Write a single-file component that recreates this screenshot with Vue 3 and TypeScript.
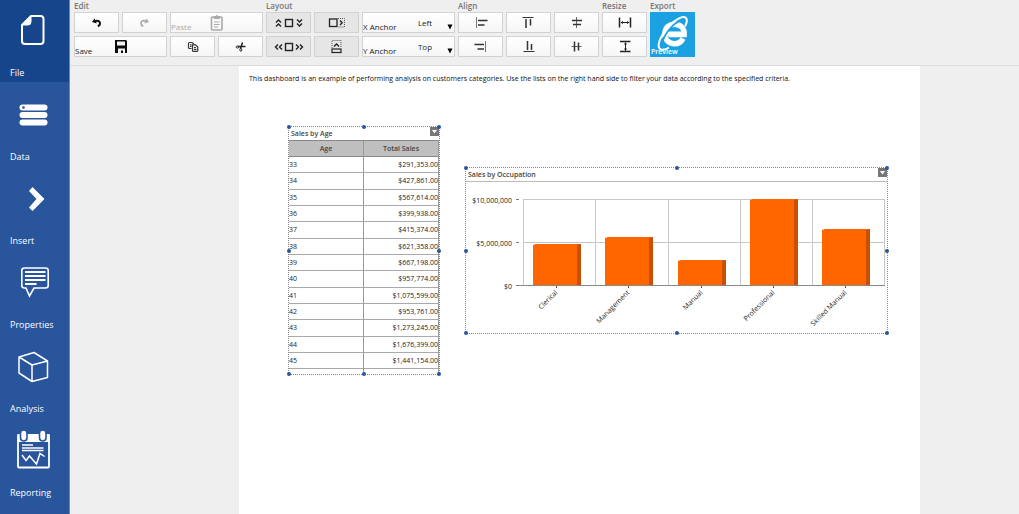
<script setup lang="ts">
import { ref } from 'vue'

interface Occupation {
  name: string
  x: number
  top: number
}

const sections = ['File', 'Data', 'Insert', 'Properties', 'Analysis', 'Reporting']
const active = ref('File')
const xAnchor = ref('Left')
const yAnchor = ref('Top')

const sales: [number, string][] = [
  [33, '$291,353.00'],
  [34, '$427,861.00'],
  [35, '$567,614.00'],
  [36, '$399,938.00'],
  [37, '$415,374.00'],
  [38, '$621,358.00'],
  [39, '$667,198.00'],
  [40, '$957,774.00'],
  [41, '$1,075,599.00'],
  [42, '$953,761.00'],
  [43, '$1,273,245.00'],
  [44, '$1,676,399.00'],
  [45, '$1,441,154.00'],
  [46, '$1,391,088.00'],
]

const base = 103
const occupations: Occupation[] = [
  { name: 'Clerical', x: 67, top: 62 },
  { name: 'Management', x: 139, top: 55 },
  { name: 'Manual', x: 212, top: 78 },
  { name: 'Professional', x: 284, top: 17 },
  { name: 'Skilled Manual', x: 356, top: 47 },
]
const gridX = [57, 129, 202, 274, 346, 418]
const ticks = [
  { label: '$10,000,000', y: 17 },
  { label: '$5,000,000', y: 60 },
  { label: '$0', y: 103 },
]
const handles = ['nw', 'n', 'ne', 'w', 'e', 'sw', 's', 'se']
</script>

<template>
  <div class="app">
    <nav class="sidebar">
      <button
        v-for="s in sections"
        :key="s"
        type="button"
        class="section"
        :class="{ active: s === active }"
        @click="active = s"
      >
        <svg class="section-icon" viewBox="0 0 70 66" fill="none" stroke="#fff" aria-hidden="true">
          <g v-if="s === 'File'">
            <path d="M31 18H40.500Q43.500 18 43.500 21V43Q43.500 46 40.500 46H25Q22 46 22 43V27Z" stroke-width="2" />
            <path d="M22 27L31 18V24Q31 27 28 27Z" fill="#fff" />
          </g>
          <g v-else-if="s === 'Data'" fill="#fff" stroke="none">
            <rect x="19.500" y="22.500" width="28" height="6" rx="3" />
            <rect x="19.500" y="30" width="28" height="6" rx="3" />
            <rect x="19.500" y="37.500" width="28" height="6" rx="3" />
            <circle cx="23.500" cy="25.500" r="1.300" fill="#28559c" />
          </g>
          <path v-else-if="s === 'Insert'" d="M29 25L32.500 21L44.500 33L32.500 45L29 41.500L36.500 33Z" fill="#fff" stroke="none" />
          <g v-else-if="s === 'Properties'">
            <path d="M24.500 18H45.500Q48.200 18 48.200 20.500V35.500Q48.200 38 45.500 38H34L29.500 46L26 38H24.500Q21.800 38 21.800 35.500V20.500Q21.800 18 24.500 18Z" stroke-width="1.600" />
            <path d="M25 22H45.500M25 26H45.500M25 30H45.500M25 34H36.500" stroke-width="2" />
          </g>
          <path v-else-if="s === 'Analysis'" d="M19 23L34 18.500L47.500 27V43.500L32 47.500L19 39ZM19 23L32 31L47.500 27M32 31V47.500" stroke-width="1.500" stroke-linejoin="round" />
          <g v-else>
            <rect x="18" y="17" width="31" height="32.500" rx="1" stroke-width="1.800" />
            <path d="M17.500 16H49.500V24H17.500Z" fill="#fff" stroke="none" />
            <rect x="20.500" y="12" width="6.500" height="11" rx="3.200" fill="#fff" stroke="#28559c" stroke-width="1.600" />
            <rect x="39.500" y="12" width="6.500" height="11" rx="3.200" fill="#fff" stroke="#28559c" stroke-width="1.600" />
            <path d="M22 27H33M22 30H43.500M22 32.500H43.500" stroke-width="1.300" />
            <path d="M22 37L26 42.500L29.500 38L36.500 46L40 35.500L44.500 38.500" stroke-width="1.500" />
          </g>
        </svg>
        <span class="section-label">{{ s }}</span>
      </button>
    </nav>

    <div class="workspace">
      <header class="toolbar">
        <section class="group four">
          <h2>Edit</h2>
          <div class="buttons">
            <button type="button" class="tool" aria-label="Undo">
              <svg viewBox="1 1 43 19" fill="none" aria-hidden="true">
                <path d="M20.500 9.300C23.500 8 26 9 26 11.300C26 12.800 25.200 13.800 23.800 14.300" stroke="#111" stroke-width="2" />
                <path d="M18 10L20.500 6.500L22.800 11.500Z" fill="#111" />
              </svg>
            </button>
            <button type="button" class="tool" aria-label="Redo">
              <svg viewBox="1 1 43 19" fill="none" aria-hidden="true">
                <path d="M24.500 9.300C21.500 8 19 9 19 11.300C19 12.800 19.800 13.800 21.200 14.300" stroke="#aaa" stroke-width="1.800" />
                <path d="M27 10L24.500 6.500L22.200 11.500Z" fill="#aaa" />
              </svg>
            </button>
            <button type="button" class="tool wide" disabled>
              <svg viewBox="1 1 91 19" fill="none" stroke="#aaa" aria-hidden="true">
                <rect x="41.500" y="5" width="10.500" height="13" rx="1" stroke-width="1.600" />
                <path d="M44 6.500V4.500H45.500Q46.700 2.500 48 4.500H49.500V6.500Z" fill="#aaa" />
                <path d="M44 10H49.500M44 12.500H49.500M44 15H48" />
              </svg>
              <span>Paste</span>
            </button>
            <button type="button" class="tool wide">
              <svg viewBox="1 1 91 19" aria-hidden="true">
                <path d="M41 4H52L53 5V17H41Z" fill="#0b0b0b" />
                <path d="M43 5.500H51V9.500H43ZM44 12.500H51V17H49V14.500H47V17H44Z" fill="#f4f4f4" />
              </svg>
              <span>Save</span>
            </button>
            <button type="button" class="tool" aria-label="Copy">
              <svg viewBox="1 1 43 19" fill="none" stroke="#333" stroke-width="1.200" aria-hidden="true">
                <path d="M21.500 12.500H19.500Q18.500 12.500 18.500 11.500V7.500Q18.500 6.500 19.500 6.500H22L24 8" />
                <path d="M22.500 8.800H25.500L27.800 11V14.500Q27.800 15.300 27 15.300H23.300Q22.500 15.300 22.500 14.500ZM20 8.800H21.500M20 10.500H21.500M24 11.500H26M24 13.300H26.500" />
              </svg>
            </button>
            <button type="button" class="tool" aria-label="Cut">
              <svg viewBox="1 1 43 19" fill="none" stroke="#222" aria-hidden="true">
                <path d="M27.500 10.500L20 10.500M24.500 6.500L22.500 12.500" stroke-width="1.500" />
                <ellipse cx="19.500" cy="11" rx="1.400" ry="1" />
                <ellipse cx="22.800" cy="13.800" rx="1" ry="1.400" />
              </svg>
            </button>
          </div>
        </section>

        <section class="group four">
          <h2>Layout</h2>
          <div class="buttons">
            <button type="button" class="tool shaded" aria-label="Stretch vertically">
              <svg viewBox="1 1 43 19" fill="none" stroke="#222" stroke-width="1.400" aria-hidden="true">
                <rect x="19.500" y="7.500" width="7" height="7" />
                <path d="M10 10.500L12.500 8L15 10.500M10 14.500L12.500 12L15 14.500M31 7.500L33.500 10L36 7.500M31 11.500L33.500 14L36 11.500" />
              </svg>
            </button>
            <button type="button" class="tool shaded" aria-label="Fill right">
              <svg viewBox="1 1 43 19" fill="none" stroke="#222" aria-hidden="true">
                <rect x="15.500" y="7" width="7.500" height="7.500" stroke-width="1.300" />
                <path d="M24 6.500H30.500V15H24" stroke="#555" stroke-dasharray="1 1" />
                <path d="M26 8.500L28.200 10.800L26 13" stroke-width="1.300" />
              </svg>
            </button>
            <label class="anchor">
              <span class="anchor-label">X Anchor</span>
              <select v-model="xAnchor">
                <option>Left</option>
                <option>Right</option>
              </select>
              <svg class="caret" viewBox="0 0 6 6" aria-hidden="true"><path d="M0.500 0.500H5.500L3 5.500Z" /></svg>
            </label>
            <button type="button" class="tool shaded" aria-label="Stretch horizontally">
              <svg viewBox="1 1 43 19" fill="none" stroke="#222" stroke-width="1.400" aria-hidden="true">
                <rect x="19.500" y="7.500" width="7" height="7" />
                <path d="M12 8.500L9.500 11L12 13.500M16 8.500L13.500 11L16 13.500M30 8.500L32.500 11L30 13.500M34 8.500L36.500 11L34 13.500" />
              </svg>
            </button>
            <button type="button" class="tool shaded" aria-label="Fill top">
              <svg viewBox="1 1 43 19" fill="none" stroke="#222" aria-hidden="true">
                <rect x="18" y="13" width="9" height="3.500" stroke-width="1.200" />
                <path d="M18 12V4.500H27V12" stroke="#555" stroke-dasharray="1 1" />
                <path d="M20 10.500L22.500 8L25 10.500" stroke-width="1.300" />
              </svg>
            </button>
            <label class="anchor">
              <span class="anchor-label">Y Anchor</span>
              <select v-model="yAnchor">
                <option>Top</option>
                <option>Bottom</option>
              </select>
              <svg class="caret" viewBox="0 0 6 6" aria-hidden="true"><path d="M0.500 0.500H5.500L3 5.500Z" /></svg>
            </label>
          </div>
        </section>

        <section class="group three">
          <h2>Align</h2>
          <div class="buttons">
            <button type="button" class="tool" aria-label="Align left">
              <svg viewBox="1 1 43 19" stroke="#333" aria-hidden="true">
                <path d="M18.500 5V16" stroke="#777" />
                <path d="M20 8.500H29.500M20 13H26.500" stroke-width="1.500" />
              </svg>
            </button>
            <button type="button" class="tool" aria-label="Align top">
              <svg viewBox="1 1 43 19" stroke="#333" aria-hidden="true">
                <path d="M16.500 5.500H27.500" />
                <path d="M20 7V16M24.500 7V13.500" stroke-width="1.500" />
              </svg>
            </button>
            <button type="button" class="tool" aria-label="Center horizontally">
              <svg viewBox="1 1 43 19" stroke="#333" aria-hidden="true">
                <path d="M22.500 5V16" stroke="#666" />
                <path d="M18 8.500H28M19 12.500H27" stroke-width="1.500" />
              </svg>
            </button>
            <button type="button" class="tool" aria-label="Align right">
              <svg viewBox="1 1 43 19" stroke="#333" aria-hidden="true">
                <path d="M27.500 5V16" stroke="#777" />
                <path d="M16.500 8.500H26M19.500 13H26" stroke-width="1.500" />
              </svg>
            </button>
            <button type="button" class="tool" aria-label="Align bottom">
              <svg viewBox="1 1 43 19" stroke="#333" aria-hidden="true">
                <path d="M17.500 15.500H28.500" />
                <path d="M21.500 5V14M25.500 8V14" stroke-width="1.500" />
              </svg>
            </button>
            <button type="button" class="tool" aria-label="Center vertically">
              <svg viewBox="1 1 43 19" stroke="#333" aria-hidden="true">
                <path d="M17.500 10.500H27.500" stroke="#666" />
                <path d="M20.500 5.500V15.500M24.500 6.500V14.500" stroke-width="1.500" />
              </svg>
            </button>
          </div>
        </section>

        <section class="group one">
          <h2>Resize</h2>
          <div class="buttons">
            <button type="button" class="tool" aria-label="Same width">
              <svg viewBox="1 1 43 19" stroke="#222" fill="#222" aria-hidden="true">
                <path d="M17.500 5.500V15.500M28.500 5.500V15.500" stroke-width="1.500" />
                <path d="M19 10.500H27" />
                <path d="M18.500 10.500L21 9V12ZM27.500 10.500L25 9V12Z" stroke="none" />
              </svg>
            </button>
            <button type="button" class="tool" aria-label="Same height">
              <svg viewBox="1 1 43 19" stroke="#222" fill="#222" aria-hidden="true">
                <path d="M18 5.500H28.500M18 15.500H28.500" stroke-width="1.500" />
                <path d="M23.500 7V15" />
                <path d="M23.500 6L22 8.500H25ZM23.500 15L22 12.500H25Z" stroke="none" />
              </svg>
            </button>
          </div>
        </section>

        <section class="group one">
          <h2>Export</h2>
          <div class="buttons">
            <button type="button" class="preview">
              <svg viewBox="0 0 45 45" fill="none" aria-hidden="true">
                <path d="M33 26.500C31 30.500 28 32 24 31.800C18 31.500 14.500 27 14.800 21.500C15.300 15 19.500 12 25 12.300C31 12.700 34.500 16.500 34.200 22.500H18.500" stroke="#fff" stroke-width="5.400" />
                <path d="M16.500 21.800H32" stroke="#fff" stroke-width="4.400" />
                <path d="M12.500 34.500C11 30 15 22 21 15.500C25.500 10.500 31 7.500 34 8.500" stroke="#1ba1e2" stroke-width="1.800" />
                <path d="M19 35.500C14.500 38.500 10.500 38.500 9.200 36C7 31.500 11.500 22.500 18.500 14.500C25 7.500 33 3.300 35.800 5.800C37.500 7.500 36.800 11 35 14.500" stroke="#fff" stroke-width="2" />
              </svg>
              <span>Preview</span>
            </button>
          </div>
        </section>
      </header>

      <main class="canvas">
        <div class="page">
          <p class="intro">
            This dashboard is an example of performing analysis on customers categories. Use the lists on the right hand side to filter your data according to the specified criteria.
          </p>
          <div class="widgets">
            <article class="widget age">
              <div class="widget-head">
                <h3>Sales by Age</h3>
                <button type="button" class="menu" aria-label="Sales by Age menu">
                  <svg viewBox="0 0 9 9" aria-hidden="true"><path d="M2 3H7L4.500 6.500Z" fill="#fff" /></svg>
                </button>
              </div>
              <div class="clip">
                <table>
                  <thead>
                    <tr><th scope="col">Age</th><th scope="col">Total Sales</th></tr>
                  </thead>
                  <tbody>
                    <tr v-for="row in sales" :key="row[0]">
                      <td>{{ row[0] }}</td>
                      <td class="amount">{{ row[1] }}</td>
                    </tr>
                  </tbody>
                </table>
              </div>
              <i v-for="h in handles" :key="h" class="handle" :class="h"></i>
            </article>

            <article class="widget occupation">
              <div class="widget-head">
                <h3>Sales by Occupation</h3>
                <button type="button" class="menu" aria-label="Sales by Occupation menu">
                  <svg viewBox="0 0 9 9" aria-hidden="true"><path d="M2 3H7L4.500 6.500Z" fill="#fff" /></svg>
                </button>
              </div>
              <svg class="chart" viewBox="0 0 421 151" role="img" aria-label="Sales by Occupation">
                <g stroke="#c8c8c8" fill="none">
                  <path v-for="x in gridX" :key="x" :d="`M${x}.5 17V103`" />
                  <path d="M57 17.500H419M57 60.500H419" />
                </g>
                <g v-for="t in ticks" :key="t.label">
                  <text :x="46" :y="t.y + 4" text-anchor="end">{{ t.label }}</text>
                  <path :d="`M50 ${t.y}.5H53`" stroke="#777" />
                </g>
                <path d="M53 103.500H419" stroke="#888" />
                <g v-for="o in occupations" :key="o.name">
                  <path :d="`M${o.x} ${base}V${o.top + 1}L${o.x + 3} ${o.top}H${o.x + 48}V${base}Z`" fill="#ff6600" />
                  <path :d="`M${o.x + 44} ${base}V${o.top + 1}L${o.x + 48} ${o.top}V${base}Z`" fill="#c85000" />
                  <path :d="`M${o.x + 23}.5 104V106`" stroke="#555" />
                  <text text-anchor="end" :transform="`translate(${o.x + 25} 111) rotate(-45)`">{{ o.name }}</text>
                </g>
              </svg>
              <i v-for="h in handles" :key="h" class="handle" :class="h"></i>
            </article>
          </div>
        </div>
      </main>
    </div>
  </div>
</template>

<style>
html,
body {
  margin: 0;
  height: 100%;
}
#app {
  height: 100%;
}
</style>

<style scoped>
.app {
  display: flex;
  height: 100vh;
  overflow: hidden;
  background: #efefef;
  color: #222;
  font-family: "Open Sans", "Noto Sans", sans-serif;
  font-size: 8px;
}
button,
select {
  font: inherit;
  color: inherit;
}
.sidebar {
  box-sizing: border-box;
  flex: none;
  width: 70px;
  background: #28559c;
  border-right: 1px solid #6a87b8;
}
.section {
  box-sizing: border-box;
  display: flex;
  flex-direction: column;
  justify-content: flex-end;
  gap: 1px;
  width: 100%;
  height: 84px;
  padding: 0 0 2px;
  border: 0;
  background: transparent;
  color: #fff;
  text-align: left;
}
.section:first-child {
  height: 82px;
}
.section.active {
  background: #17458b;
}
.section-icon {
  flex: none;
  width: 70px;
  height: 66px;
}
.section-label {
  padding-left: 10px;
  font-size: 9px;
  line-height: 15px;
}
.workspace {
  flex: 1;
  min-width: 0;
  display: flex;
  flex-direction: column;
}
.toolbar {
  display: flex;
  gap: 3px;
  padding: 0 4px 8px;
  border-bottom: 1px solid #dcdcdc;
}
.group h2 {
  margin: 0;
  font-size: 8px;
  font-weight: 600;
  line-height: 12px;
  color: #777;
}
.buttons {
  display: grid;
  grid-template-columns: repeat(4, 45px);
  grid-auto-rows: 21px;
  gap: 3px;
}
.three .buttons {
  grid-template-columns: repeat(3, 45px);
}
.one .buttons {
  grid-template-columns: 45px;
}
.tool,
.anchor {
  box-sizing: border-box;
  position: relative;
  padding: 0;
  border: 1px solid #d2d2d2;
  background: linear-gradient(#fff, #f6f6f6);
}
.tool svg {
  display: block;
  width: 100%;
  height: 19px;
}
.wide {
  grid-column: span 2;
}
.tool span,
.anchor-label,
.preview span {
  position: absolute;
  left: 0;
  bottom: 1px;
  line-height: 9px;
}
.tool:disabled {
  color: #aaa;
}
.shaded {
  background: #e6e6e6;
}
.anchor {
  grid-column: span 2;
  display: block;
}
.anchor select {
  appearance: none;
  display: block;
  width: 100%;
  height: 19px;
  padding: 0 16px 0 49px;
  border: 0;
  background: transparent;
  text-align: center;
  text-align-last: center;
}
.caret {
  position: absolute;
  right: 1px;
  bottom: 2px;
  width: 6px;
  height: 6px;
}
.preview {
  position: relative;
  grid-row: span 2;
  padding: 0;
  border: 0;
  background: #1ba1e2;
  color: #fff;
}
.preview svg {
  display: block;
  width: 45px;
  height: 45px;
}
.preview span {
  left: 1px;
  font-size: 7px;
  font-weight: 600;
}
.canvas {
  flex: 1;
  display: flex;
  padding: 0 99px 0 169px;
}
.page {
  flex: 1;
  min-width: 0;
  background: #fff;
}
.intro {
  margin: 0;
  padding: 7px 10px 0;
  font-size: 7px;
  line-height: 12px;
  color: #111;
}
.widgets {
  display: flex;
  align-items: flex-start;
  gap: 25px;
  padding: 41px 32px 0 49px;
}
.widget {
  box-sizing: border-box;
  position: relative;
  border: 1px dotted #888;
}
.age {
  width: 152px;
  height: 249px;
}
.occupation {
  flex: 1;
  min-width: 0;
  margin-top: 41px;
}
.widget-head {
  display: flex;
  justify-content: space-between;
  height: 13px;
}
.widget-head h3 {
  margin: 0;
  padding-left: 2px;
  font-size: 7px;
  font-weight: 600;
  line-height: 13px;
  color: #444;
}
.menu {
  width: 9px;
  height: 9px;
  padding: 0;
  border: 0;
  background: #777;
}
.menu svg {
  display: block;
}
.clip {
  height: 234px;
  overflow: hidden;
}
table {
  width: 100%;
  table-layout: fixed;
  border-collapse: separate;
  border-spacing: 0;
  font-size: 7px;
  line-height: 12px;
}
th,
td {
  box-sizing: border-box;
  height: 16px;
  padding: 0;
  border-bottom: 1px solid #aaa;
  border-right: 1px solid #999;
}
th {
  height: 17px;
  border-top: 1px solid #888;
  border-bottom-color: #888;
  background: #bfbfbf;
  font-weight: 600;
  color: #444;
}
tbody tr:nth-child(3n + 2) td {
  height: 17px;
}
.amount {
  text-align: right;
}
.occupation .chart {
  display: block;
  width: 100%;
  border-top: 1px solid #bbb;
  font-size: 7px;
  fill: #222;
}
.handle {
  position: absolute;
  width: 4px;
  height: 4px;
  border-radius: 50%;
  background: #28559c;
}
.nw,
.n,
.ne {
  top: -2px;
}
.w,
.e {
  top: calc(50% - 2px);
}
.sw,
.s,
.se {
  bottom: -2px;
}
.nw,
.w,
.sw {
  left: -2px;
}
.n,
.s {
  left: calc(50% - 2px);
}
.ne,
.e,
.se {
  right: -2px;
}
</style>
